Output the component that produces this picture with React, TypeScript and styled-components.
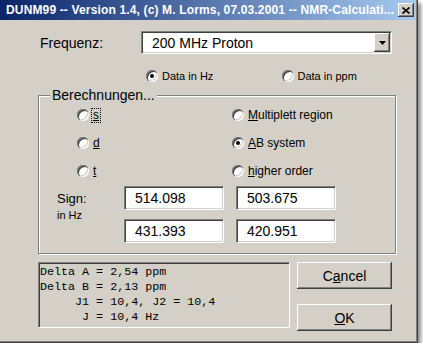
import React from "react";
import styled, { createGlobalStyle } from "styled-components";

const GlobalStyle = createGlobalStyle`
  body {
    margin: 0;
    background: #ffffff;
  }
`;

const memoText = `Delta A = 2,54 ppm
Delta B = 2,13 ppm
     J1 = 10,4, J2 = 10,4
      J = 10,4 Hz`;

function Radio({ checked, label }: { checked?: boolean; label: React.ReactNode }) {
  return (
    <RadioItem>
      <RadioDot $checked={checked} />
      {label}
    </RadioItem>
  );
}

function App() {
  return (
    <>
      <GlobalStyle />
      <Window>
        <TitleBar>
          <TitleText>DUNM99 -- Version 1.4, (c) M. Lorms, 07.03.2001 -- NMR-Calculati...</TitleText>
          <CloseButton>
            <svg width="8" height="7" viewBox="0 0 8 7">
              <path d="M0.5 0.5 L7.5 6.5 M7.5 0.5 L0.5 6.5" stroke="#000" strokeWidth="1.6" />
            </svg>
          </CloseButton>
        </TitleBar>

        <Client>
          <FreqRow>
            <FreqLabel>Frequenz:</FreqLabel>
            <Combo>
              <ComboText>200 MHz Proton</ComboText>
              <ComboButton>
                <svg width="7" height="4" viewBox="0 0 7 4">
                  <path d="M0 0 H7 L3.5 4 Z" fill="#000" />
                </svg>
              </ComboButton>
            </Combo>
          </FreqRow>

          <UnitsRow>
            <UnitCell>
              <Radio checked label="Data in Hz" />
            </UnitCell>
            <UnitCell>
              <Radio label="Data in ppm" />
            </UnitCell>
          </UnitsRow>

          <GroupBox>
            <Legend>Berechnungen...</Legend>
            <RadioGrid>
              <Radio label={<FocusLabel><u>s</u></FocusLabel>} />
              <Radio label={<span><u>M</u>ultiplett region</span>} />
              <Radio label={<span><u>d</u></span>} />
              <Radio checked label={<span><u>A</u>B system</span>} />
              <Radio label={<span><u>t</u></span>} />
              <Radio label={<span><u>h</u>igher order</span>} />
            </RadioGrid>

            <SignGrid>
              <SignLabel>
                <SignText>Sign:</SignText>
                <UnitText>in Hz</UnitText>
              </SignLabel>
              <Field>514.098</Field>
              <Field>503.675</Field>
              <Field>431.393</Field>
              <Field>420.951</Field>
            </SignGrid>
          </GroupBox>

          <BottomRow>
            <Memo>{memoText}</Memo>
            <ButtonColumn>
              <PushButton>C<u>a</u>ncel</PushButton>
              <PushButton><u>O</u>K</PushButton>
            </ButtonColumn>
          </BottomRow>
        </Client>
      </Window>
    </>
  );
}

export default App;

const Window = styled.div`
  width: 418px;
  height: 343px;
  box-sizing: border-box;
  background: #d4d0c8;
  border-right: 1px solid #404040;
  border-bottom: 1px solid #404040;
  box-shadow: inset -1px -1px #808080, 3px 3px 4px rgba(0, 0, 0, 0.45);
  display: flex;
  flex-direction: column;
  font-family: "Liberation Sans", Arial, sans-serif;
  color: #000;
`;

const TitleBar = styled.div`
  height: 20px;
  width: 416px;
  display: flex;
  align-items: center;
  justify-content: space-between;
  padding: 0 2px 0 6px;
  box-sizing: border-box;
  background: linear-gradient(to right, #0a246a, #a6caf0);
`;

const TitleText = styled.div`
  color: #fff;
  font-weight: bold;
  font-size: 12px;
  letter-spacing: 0.15px;
  white-space: nowrap;
  overflow: hidden;
`;

const CloseButton = styled.div`
  width: 16px;
  height: 14px;
  flex-shrink: 0;
  background: #d4d0c8;
  box-shadow: inset -1px -1px #404040, inset 1px 1px #fff, inset -2px -2px #808080;
  display: flex;
  align-items: center;
  justify-content: center;
`;

const Client = styled.div`
  display: flex;
  flex-direction: column;
  padding-top: 11px;
`;

const FreqRow = styled.div`
  display: flex;
  align-items: center;
  height: 23px;
  padding-left: 40px;
`;

const FreqLabel = styled.div`
  width: 101px;
  font-size: 14px;
`;

const sunken = `
  box-sizing: border-box;
  border: 1px solid;
  border-color: #808080 #fff #fff #808080;
  box-shadow: inset 1px 1px #404040, inset -1px -1px #d4d0c8;
`;

const Combo = styled.div`
  ${sunken}
  width: 251px;
  height: 23px;
  padding: 1px;
  background: #fff;
  display: flex;
  align-items: center;
`;

const ComboText = styled.div`
  font-size: 14px;
  padding-left: 9px;
`;

const ComboButton = styled.div`
  margin-left: auto;
  width: 16px;
  height: 100%;
  box-sizing: border-box;
  background: #d4d0c8;
  box-shadow: inset -1px -1px #404040, inset 1px 1px #fff, inset -2px -2px #808080;
  display: flex;
  align-items: center;
  justify-content: center;
`;

const UnitsRow = styled.div`
  display: flex;
  margin-top: 16px;
  padding-left: 146px;
  height: 12px;
  font-size: 11px;
`;

const UnitCell = styled.div`
  width: 140px;
`;

const RadioItem = styled.div`
  display: flex;
  align-items: center;
  gap: 4px;
  white-space: nowrap;
  height: 12px;
`;

const RadioDot = styled.span<{ $checked?: boolean }>`
  position: relative;
  width: 12px;
  height: 12px;
  flex-shrink: 0;
  border-radius: 50%;
  background: #fff;
  box-shadow: inset 1px 1px #808080, inset 2px 2px #404040, inset -1px -1px #fff,
    inset -2px -2px #d4d0c8;

  &::after {
    content: "";
    display: ${(p) => (p.$checked ? "block" : "none")};
    position: absolute;
    left: 4px;
    top: 4px;
    width: 4px;
    height: 4px;
    border-radius: 50%;
    background: #000;
  }
`;

const GroupBox = styled.div`
  position: relative;
  margin: 13px 0 0 38px;
  width: 358px;
  height: 159px;
  box-sizing: border-box;
  border: 1px solid #808080;
  box-shadow: inset 1px 1px #fff, 1px 1px #fff;
  padding-top: 5px;
`;

const Legend = styled.div`
  position: absolute;
  top: -9px;
  left: 11px;
  padding: 0 2px;
  background: #d4d0c8;
  font-size: 14px;
  line-height: 16px;
`;

const RadioGrid = styled.div`
  display: grid;
  grid-template-columns: 155px auto;
  grid-auto-rows: 28px;
  align-items: center;
  padding-left: 38px;
  font-size: 12px;
`;

const FocusLabel = styled.span`
  margin-left: -2px;
  padding: 0 1px;
  border: 1px dotted #000;
  line-height: 13px;
`;

const SignGrid = styled.div`
  display: grid;
  grid-template-columns: 55px 100px 100px;
  grid-template-rows: 24px 24px;
  column-gap: 12px;
  row-gap: 9px;
  margin-top: 1px;
  padding-left: 18px;
`;

const SignLabel = styled.div`
  grid-row: span 2;
  display: flex;
  flex-direction: column;
`;

const SignText = styled.div`
  font-size: 13px;
  line-height: 25px;
`;

const UnitText = styled.div`
  font-size: 11px;
  line-height: 12px;
  margin-top: -2px;
`;

const Field = styled.div`
  ${sunken}
  height: 24px;
  background: #fff;
  font-size: 14px;
  padding-left: 10px;
  display: flex;
  align-items: center;
`;

const BottomRow = styled.div`
  display: flex;
  gap: 7px;
  margin-top: 8px;
  padding-left: 38px;
`;

const Memo = styled.div`
  ${sunken}
  width: 252px;
  height: 66px;
  padding: 2px 0 0 1px;
  font-family: "Liberation Mono", "Courier New", monospace;
  font-size: 11.7px;
  line-height: 15px;
  white-space: pre;
  overflow: hidden;
`;

const ButtonColumn = styled.div`
  display: flex;
  flex-direction: column;
  gap: 15px;
  width: 95px;
`;

const PushButton = styled.div`
  height: 27px;
  box-sizing: border-box;
  background: #d4d0c8;
  box-shadow: inset -1px -1px #404040, inset 1px 1px #fff, inset -2px -2px #808080;
  display: flex;
  align-items: center;
  justify-content: center;
  font-size: 14px;
`;
